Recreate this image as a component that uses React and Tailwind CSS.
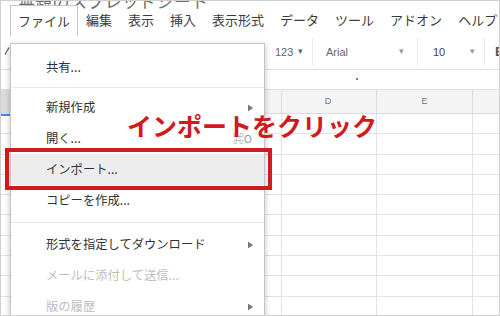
import React from "react";

const menuBar = ["編集", "表示", "挿入", "表示形式", "データ", "ツール", "アドオン", "ヘルプ"];

const fileMenu = [
  { label: "共有..." },
  { sep: "my-[4px]" },
  { label: "新規作成", arrow: true },
  { label: "開く...", shortcut: "⌘O" },
  { label: "インポート...", active: true },
  { label: "コピーを作成..." },
  { sep: "my-[6px]" },
  { label: "形式を指定してダウンロード", arrow: true },
  { label: "メールに添付して送信...", disabled: true },
  { label: "版の履歴", arrow: true, disabled: true },
];

function Arrow() {
  return (
    <svg width="5" height="7" viewBox="0 0 5 7" className="absolute right-[11px] top-1/2 -translate-y-1/2">
      <path d="M0 0 L5 3.5 L0 7 Z" fill="#777" />
    </svg>
  );
}

function GridRow({ first }) {
  return (
    <div className="flex h-[20.3px] border-b border-[#e3e3e3]">
      <div className={`w-[92px] border-r border-[#e3e3e3] ${first ? "border-t-2 border-t-[#4a86e8]" : ""}`} />
      <div className="w-[95px] border-r border-[#e3e3e3]" />
      <div className="w-[95px] border-r border-[#e3e3e3]" />
      <div className="w-[95px] border-r border-[#e3e3e3]" />
      <div className="w-[96px] border-r border-[#e3e3e3]" />
      <div className="flex-1" />
    </div>
  );
}

export default function App() {
  return (
    <div
      className="relative w-[500px] h-[316px] overflow-hidden bg-white"
      style={{ fontFamily: '"Noto Sans CJK JP", "Noto Sans", sans-serif' }}
    >
      {/* title */}
      <div className="h-[13px] pl-[18px] whitespace-nowrap">
        <div className="text-[17px] leading-[18px] -mt-[8px] text-[#6f6f6f] tracking-[0.3px]">無題のスプレッドシート</div>
      </div>

      {/* menu bar */}
      <div className="flex h-[30px] pl-[10px] text-[13px] text-[#3c3c3c] whitespace-nowrap">
        <div className="relative z-30 shrink-0 h-[31px] px-[7px] flex items-center bg-white border border-b-0 border-[#c6c6c6]">
          ファイル
        </div>
        {menuBar.map((m) => (
          <div key={m} className="shrink-0 px-[8px] flex items-center">
            {m}
          </div>
        ))}
      </div>

      {/* toolbar */}
      <div className="flex h-[35px] border-b border-[#e0e0e0] text-[11px] text-[#666]" style={{ fontFamily: '"Liberation Sans", Arial, sans-serif' }}>
        <div className="w-[266px] shrink-0 relative">
          <svg width="6" height="8" viewBox="0 0 6 8" className="absolute left-[4px] top-[12px]">
            <path d="M5 0.5 L1 7.5" stroke="#666" strokeWidth="1.3" />
          </svg>
        </div>
        <div className="w-[47px] shrink-0 flex items-center pl-[9px] gap-[5px] border-r border-[#ececec] my-[3px]">
          <span>123</span>
          <span className="text-[9px]">▾</span>
        </div>
        <div className="w-[105px] shrink-0 flex items-center justify-between pl-[13px] pr-[13px] border-r border-[#ececec] my-[3px]">
          <span>Arial</span>
          <span className="text-[9px] text-[#999]">▾</span>
        </div>
        <div className="w-[67px] shrink-0 flex items-center justify-between pl-[15px] pr-[9px] border-r border-[#ececec] my-[3px]">
          <span className="text-[#444]">10</span>
          <span className="text-[9px] text-[#999]">▾</span>
        </div>
        <div className="flex items-center pl-[10px]">
          <span className="font-bold text-[13px] text-[#555]">B</span>
        </div>
      </div>

      {/* formula bar */}
      <div className="relative h-[20px] border-b border-[#e0e0e0]">
        <div className="absolute left-[356px] top-[8px] w-[2px] h-[2px] rounded-full bg-[#c0262c]" />
      </div>

      {/* column headers */}
      <div className="flex h-[24px] bg-[#f4f4f4] border-b border-[#dcdcdc] text-[9px] text-[#777]" style={{ fontFamily: '"Liberation Sans", Arial, sans-serif' }}>
        <div className="w-[92px] bg-[#dcdcdc] border-r border-[#d0d0d0]" />
        <div className="w-[95px] border-r border-[#dcdcdc]" />
        <div className="w-[95px] border-r border-[#dcdcdc]" />
        <div className="w-[95px] border-r border-[#dcdcdc] flex items-center justify-center pr-[2px]">D</div>
        <div className="w-[96px] border-r border-[#dcdcdc] flex items-center justify-center">E</div>
        <div className="flex-1" />
      </div>

      {/* rows */}
      {Array.from({ length: 10 }).map((_, i) => (
        <GridRow key={i} first={i === 0} />
      ))}

      {/* file menu dropdown */}
      <div className="absolute z-20 left-[10px] top-[43px] w-[255px] h-[290px] bg-white border border-[#c6c6c6] shadow-[0_2px_6px_rgba(0,0,0,0.25)] pt-[8px] text-[12.3px] text-[#333] whitespace-nowrap">
        {fileMenu.map((item, i) =>
          item.sep ? (
            <div key={i} className={`${item.sep} border-t border-[#e6e6e6]`} />
          ) : (
            <div
              key={i}
              className={`relative h-[31px] flex items-center pl-[35px] ${item.active ? "bg-[#ececec]" : ""} ${
                item.disabled ? "text-[#bdbdbd]" : ""
              }`}
            >
              {item.label}
              {item.shortcut && (
                <span className="absolute right-[12px] text-[11px] text-[#999]">{item.shortcut}</span>
              )}
              {item.arrow && <Arrow />}
            </div>
          )
        )}
      </div>

      {/* red highlight box */}
      <div className="absolute z-40 left-[5px] top-[148px] w-[267px] h-[42px] border-[4px] border-[#d3191c]" />

      {/* annotation */}
      <div className="absolute z-40 left-[127px] top-[111px] text-[25px] leading-[28px] font-bold text-[#d3191c] whitespace-nowrap">
        インポートをクリック
      </div>

      {/* outer frame */}
      <div className="absolute inset-0 z-50 border border-[#cfcfcf] pointer-events-none" />
    </div>
  );
}
